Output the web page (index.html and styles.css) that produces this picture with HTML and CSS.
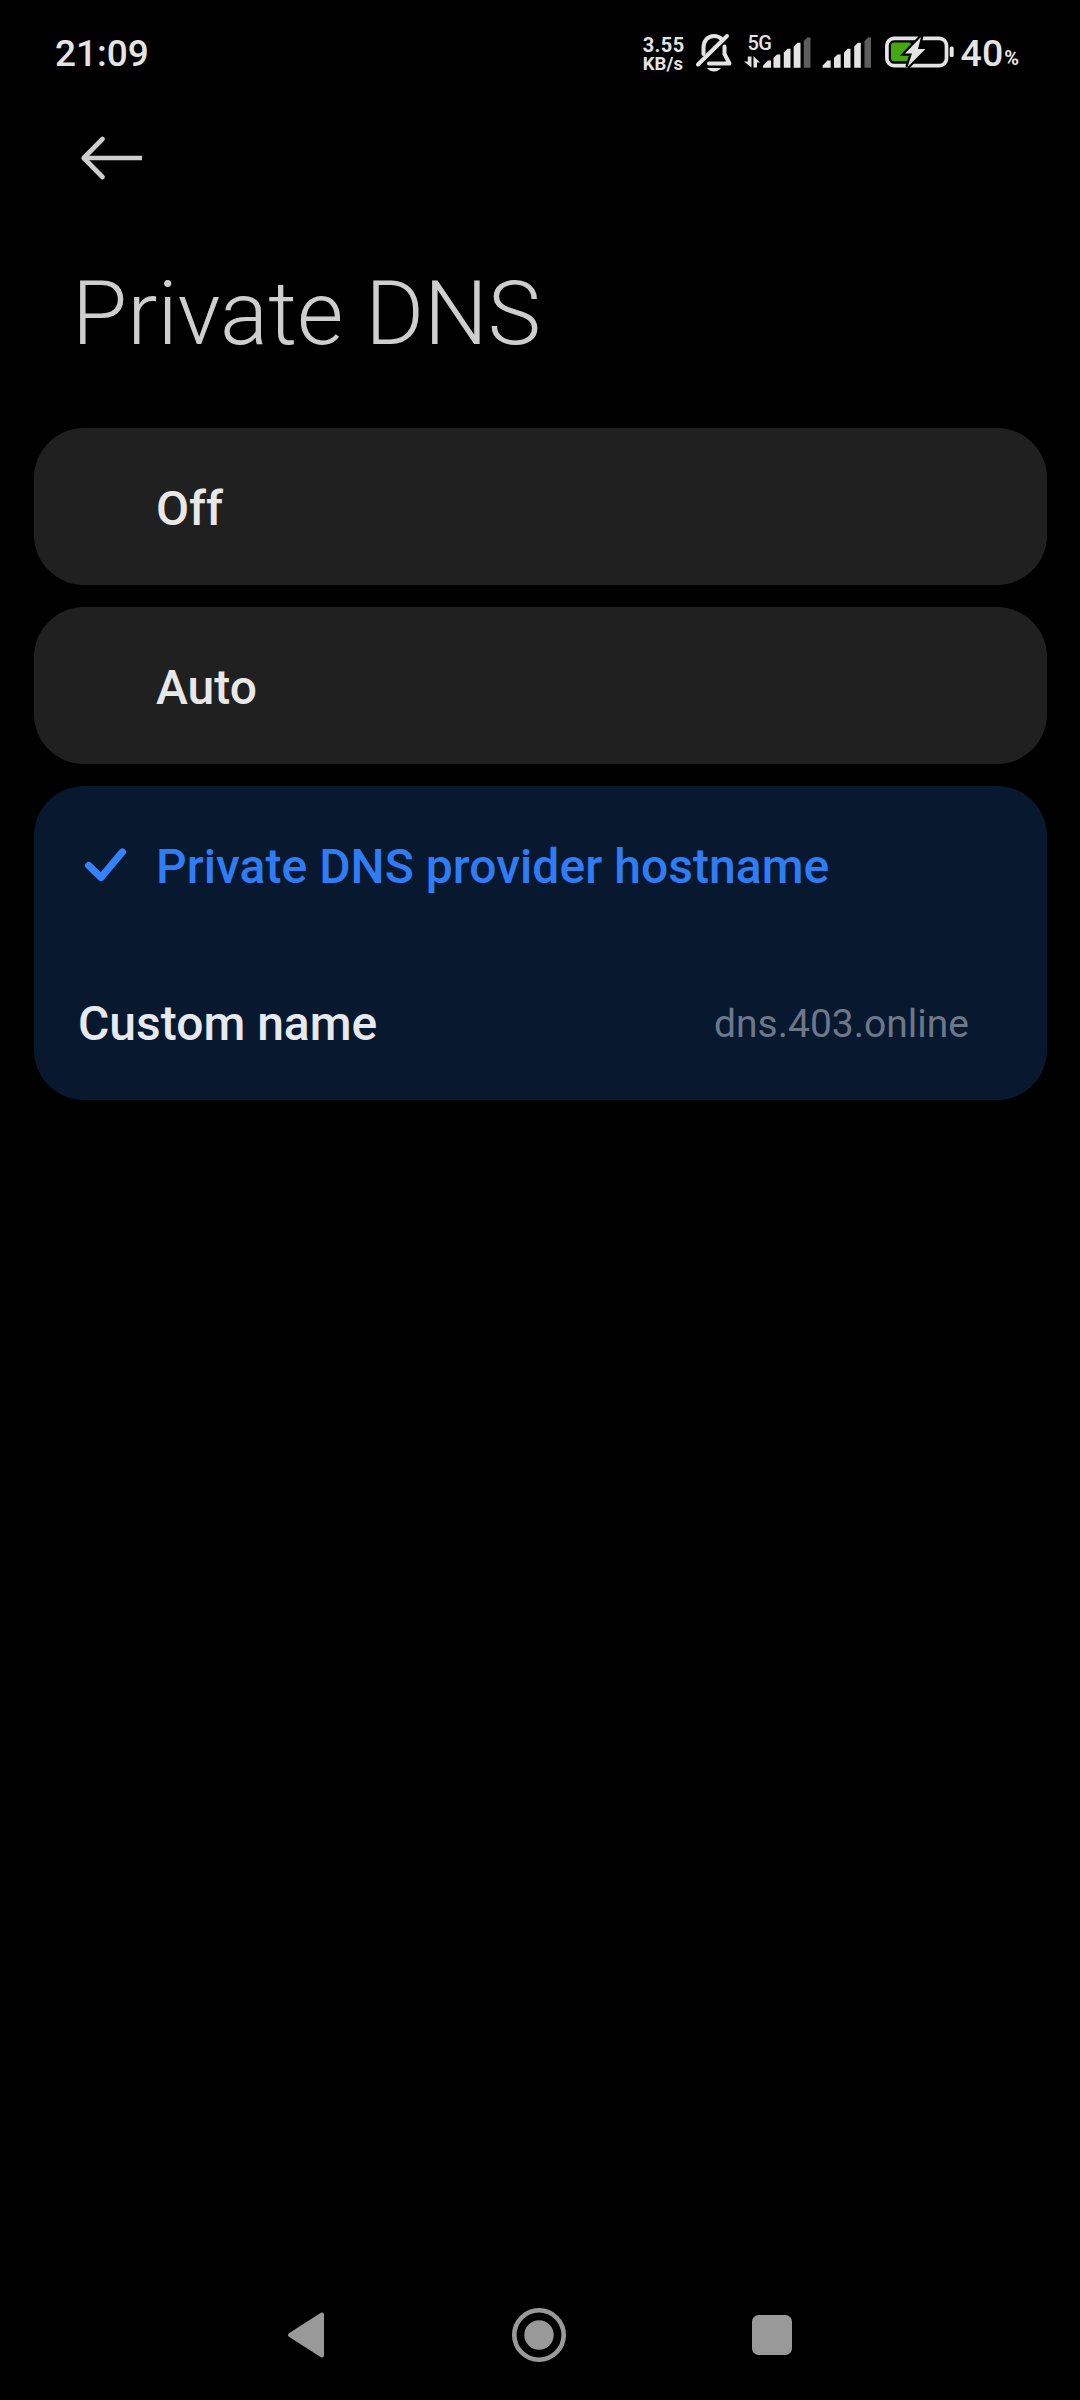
FILE: index.html
```html
<!DOCTYPE html>
<html lang="en">
<head>
<meta charset="utf-8">
<title>Private DNS</title>
<link rel="stylesheet" href="styles.css">
</head>
<body>
<div class="screen">
  <header class="status-bar">
    <span class="clock">21:09</span>
    <div class="status-icons">
      <div class="net-speed"><span>3.55</span><span class="unit">KB/s</span></div>
      <svg class="bell" width="38" height="40" viewBox="0 0 38 40" fill="none" stroke="#e4e4e4" stroke-width="4" stroke-linecap="round" stroke-linejoin="round">
        <path d="M8.500 22V16C8.500 8.500 13 4 19 4C22 4 24.500 5 26.500 7M29.500 14.500V22L34.500 31.500H14"/>
        <path d="M32 4L3 32.500"/>
        <path d="M12 36H26C24 38.500 22 39.500 19 39.500S14 38.500 12 36Z" fill="#e4e4e4" stroke="none"/>
      </svg>
      <div class="signal-5g">
        <span class="net-type">5G</span>
        <svg width="68" height="32" viewBox="0 0 68 32" fill="#e4e4e4">
          <path d="M3.800 20.500H7.500V31.500L0 25.500H3.800Z"/>
          <path d="M9.500 20L16 26.500H13V31.500H9.500Z"/>
          <path d="M19 31.700V29.500L24 24.500H27V31.700Z"/>
          <path d="M29.500 31.700V22L33 18.500H36.300V31.700Z"/>
          <path d="M39.800 31.700V16.500L43.500 12.700H46.500V31.700Z"/>
          <path d="M49.700 31.700V10.500L53.500 6.700H56.500V31.700Z"/>
          <path fill="#5e5e5e" d="M59.800 31.700V5L63.500 1.500H66.500V31.700Z"/>
        </svg>
      </div>
      <svg class="signal" width="50" height="32" viewBox="0 0 50 32" fill="#e4e4e4">
        <path d="M0.700 31.700V29.500L5.500 24.500H8.700V31.700Z"/>
        <path d="M12 31.700V22L15.500 18.500H18.700V31.700Z"/>
        <path d="M22 31.700V16.500L25.500 12.700H28.500V31.700Z"/>
        <path d="M32.200 31.700V10.500L35.800 6.700H38.800V31.700Z"/>
        <path fill="#5e5e5e" d="M42.500 31.700V5L46 1.500H49V31.700Z"/>
      </svg>
      <svg class="battery" width="70" height="36" viewBox="0 0 70 36">
        <rect x="1.900" y="4.400" width="59.600" height="27.200" rx="7" fill="none" stroke="#e4e4e4" stroke-width="3.700"/>
        <rect x="6" y="8.500" width="20.500" height="18.800" rx="3" fill="#46a80f"/>
        <rect x="64.700" y="12.500" width="4" height="10.500" rx="1.500" fill="#e4e4e4"/>
        <path d="M36 3L20 19.500H27L22.500 33L40.500 15H33Z" fill="#e4e4e4" stroke="#000" stroke-width="4.500" paint-order="stroke"/>
      </svg>
      <span class="level">40</span><span class="percent">%</span>
    </div>
  </header>

  <nav class="toolbar">
    <svg width="64" height="48" viewBox="0 0 64 48" fill="none" stroke="#cecece" stroke-width="4.700" stroke-linecap="round" stroke-linejoin="round">
      <path d="M22.500 5L3.700 24L22.500 43"/>
      <path stroke-linecap="butt" d="M4.500 24H62"/>
    </svg>
  </nav>
  <h1 class="title">Private DNS</h1>

  <main class="options">
    <div class="card"><div class="row"><span class="mark"></span><span class="label">Off</span></div></div>
    <div class="card"><div class="row"><span class="mark"></span><span class="label">Auto</span></div></div>
    <div class="card selected">
      <div class="row">
        <span class="mark">
          <svg width="46" height="36" viewBox="0 0 46 36" fill="none" stroke="#3482ff" stroke-width="7.300" stroke-linecap="round" stroke-linejoin="round"><path d="M6.700 17.500L19 29.500L40.300 4"/></svg>
        </span>
        <span class="label">Private DNS provider hostname</span>
      </div>
      <div class="row custom"><span class="name">Custom name</span><span class="value">dns.403.online</span></div>
    </div>
  </main>

  <footer class="nav-bar">
    <svg width="40" height="50" viewBox="0 0 40 50"><path d="M4 25L36 4.500V45.500Z" fill="#999" stroke="#999" stroke-width="4" stroke-linejoin="round"/></svg>
    <svg width="56" height="56" viewBox="0 0 56 56"><circle cx="28" cy="28" r="24.700" fill="none" stroke="#999" stroke-width="4.600"/><circle cx="28" cy="28" r="14.700" fill="#999"/></svg>
    <svg width="40" height="40" viewBox="0 0 40 40"><rect width="40" height="40" rx="6.500" fill="#999"/></svg>
  </footer>
</div>
</body>
</html>
```
FILE: styles.css
```css
* { box-sizing: border-box; }
body { margin: 0; background: #000; font-family: Roboto, sans-serif; }
svg { display: block; flex: none; }

.screen {
  width: 1080px;
  height: 2400px;
  display: flex;
  flex-direction: column;
  background: #000;
  color: #e8e8e8;
  overflow: hidden;
}

.status-bar {
  height: 104px;
  padding: 0 61px 0 55px;
  display: flex;
  justify-content: space-between;
  align-items: center;
  color: #e4e4e4;
}
.clock { font-size: 37px; font-weight: 500; line-height: 44px; margin-top: 4px; }
.status-icons { display: flex; align-items: center; }
.net-speed {
  display: flex;
  flex-direction: column;
  font-size: 20px;
  font-weight: 700;
  line-height: 18.500px;
  letter-spacing: .4px;
  margin: 5px 10px 0 0;
}
.unit { font-size: 18.500px; letter-spacing: .1px; }
.bell { margin-right: 11px; }
.signal-5g {
  position: relative;
  margin-right: 10px;
}
.net-type {
  position: absolute;
  left: 4px;
  top: -3px;
  font-size: 20px;
  font-weight: 500;
  line-height: 20px;
  letter-spacing: -.8px;
}
.battery { margin: 0 6px 0 13px; }
.level { font-size: 37.500px; font-weight: 500; line-height: 44px; margin-top: 2px; }
.percent { font-size: 20px; font-weight: 700; line-height: 24px; margin: 11px 0 0 1px; }

.toolbar { height: 106px; padding: 30px 0 0 80px; }

.title {
  margin: 0;
  height: 218px;
  padding: 51px 0 0 72px;
  font-size: 89.700px;
  font-weight: 300;
  line-height: 106px;
  color: #cecece;
}

.options {
  flex: 1;
  padding: 0 33px 0 34px;
  display: flex;
  flex-direction: column;
  gap: 22px;
}
.card { border-radius: 50px; background: #202020; }
.card.selected { background: #07182f; }
.row {
  height: 157px;
  padding: 4px 78px 0 44px;
  display: flex;
  align-items: center;
  font-size: 48px;
  font-weight: 500;
}
.mark { width: 78px; padding: 0 0 2px 4px; }
.label { letter-spacing: .05px; }
.selected .label { color: #2f7df6; }
.custom { justify-content: space-between; color: #e6e9ee; }
.value { font-size: 39px; font-weight: 400; color: #6c788a; }

.nav-bar {
  height: 130px;
  padding: 0 288px 0 286px;
  display: flex;
  align-items: center;
  justify-content: space-between;
}
```
